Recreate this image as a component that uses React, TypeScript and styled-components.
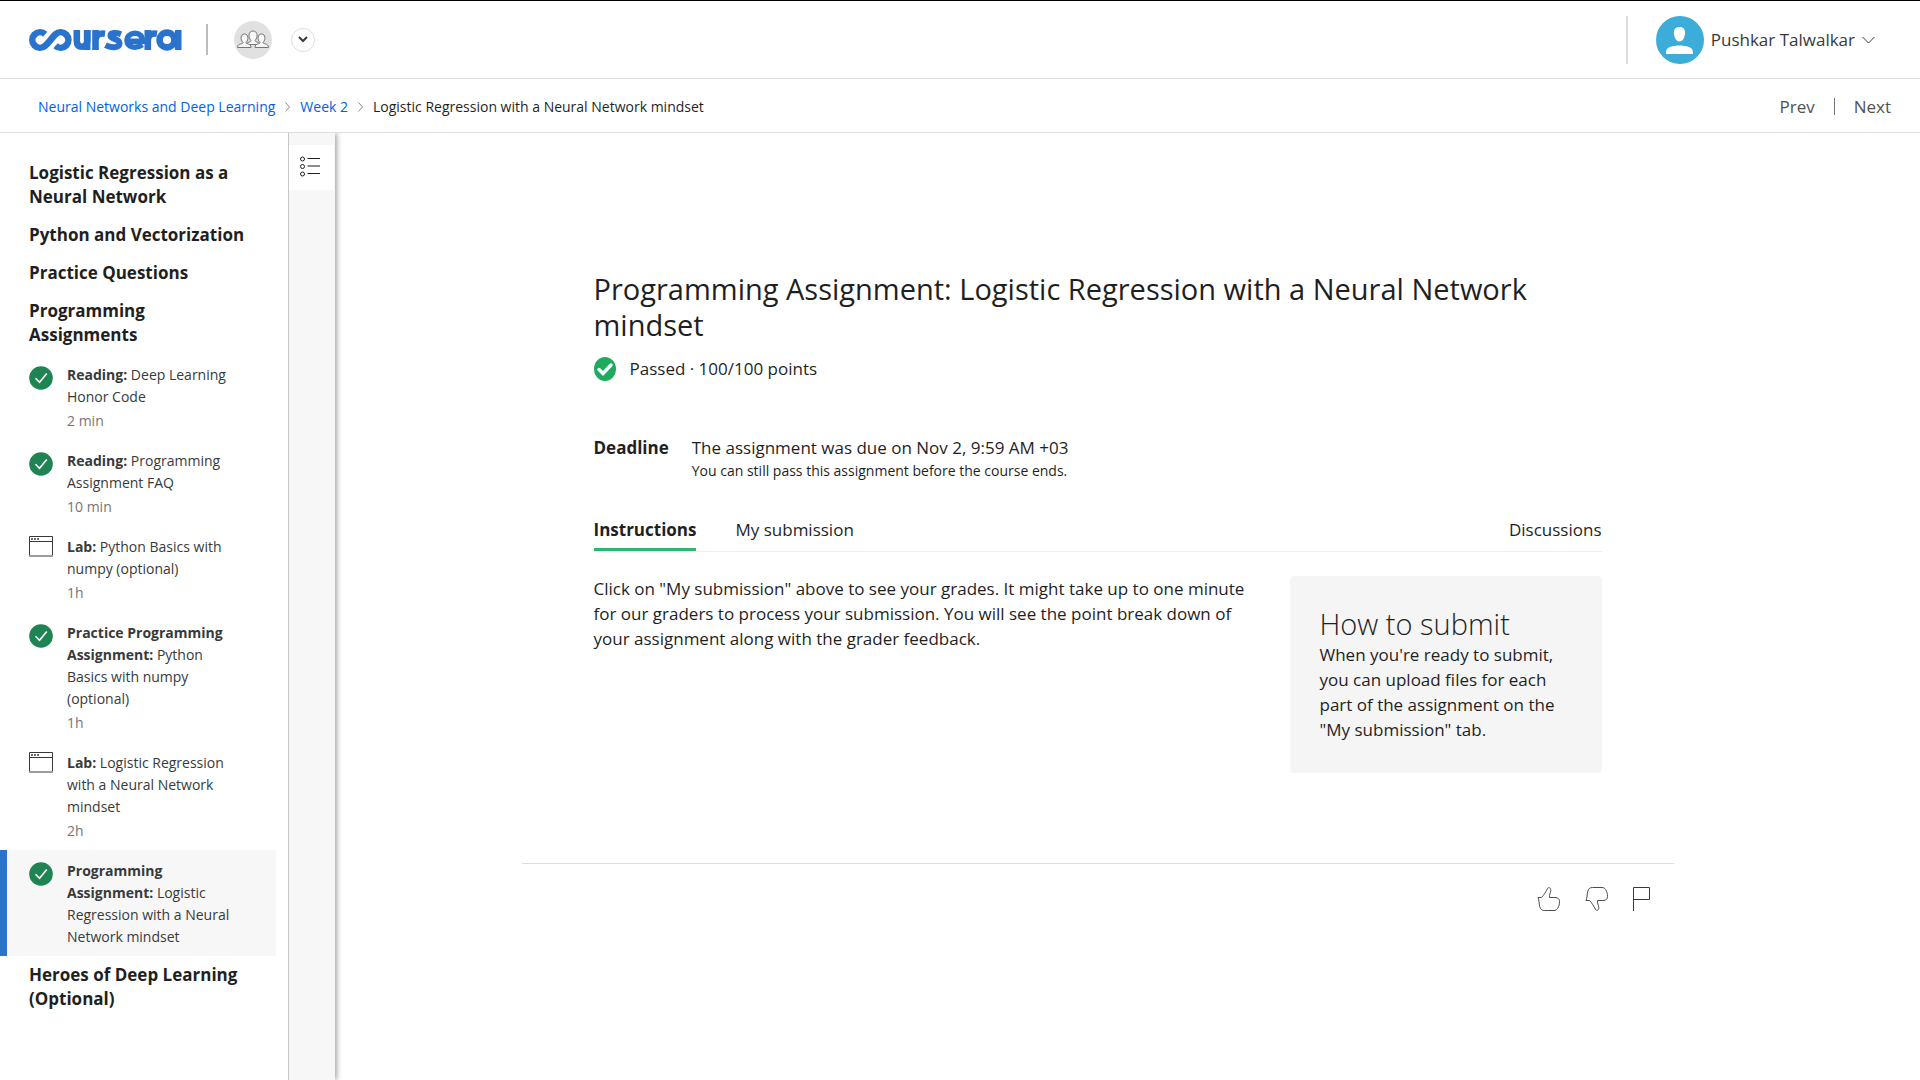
import React from "react";
import styled, { createGlobalStyle } from "styled-components";

const GlobalStyle = createGlobalStyle`
  *, *::before, *::after { box-sizing: border-box; }
  body { margin: 0; background: #fff; color: #1f1f1f; font-family: "Open Sans", "Noto Sans", sans-serif; font-size: 17px; line-height: 24px; }
  h1, h2, h3, p, ul, dl, dd { margin: 0; padding: 0; }
  ul { list-style: none; }
  a { color: inherit; text-decoration: none; }
  button { border: 0; padding: 0; margin: 0; background: none; font: inherit; color: inherit; cursor: pointer; }
  svg { display: block; flex: none; }
`;

const Page = styled.div`
  min-height: 100vh;
  display: flex;
  flex-direction: column;
  border-top: 1px solid #000;
`;

const TopBar = styled.header`
  display: flex;
  align-items: center;
  justify-content: space-between;
  height: 78px;
  padding: 0 45px 0 29px;
  border-bottom: 1px solid #ddd;
`;

const Group = styled.div`
  display: flex;
  align-items: center;
`;

const Rule = styled.span<{ $height: number; $color: string; $width?: number }>`
  width: ${(p) => p.$width ?? 2}px;
  height: ${(p) => p.$height}px;
  background: ${(p) => p.$color};
`;

const HomeLink = styled.a`
  margin-right: 24px;
`;

const Circle = styled.span`
  display: grid;
  place-items: center;
  width: 38px;
  height: 38px;
  margin: 0 19px 0 26px;
  border-radius: 50%;
  background: #e1e1e1;
`;

const SwitchButton = styled.button`
  display: grid;
  place-items: center;
  width: 24px;
  height: 24px;
  border: 1px solid #ddd;
  border-radius: 50%;
`;

const Account = styled.button`
  display: flex;
  align-items: center;
  gap: 7px;
  margin-left: 28px;
  color: #373a3c;
`;

const CrumbBar = styled.div`
  display: flex;
  align-items: center;
  justify-content: space-between;
  height: 54px;
  padding: 2px 29px 0 38px;
  border-bottom: 1px solid #ddd;
`;

const Crumbs = styled.nav`
  display: flex;
  align-items: center;
  gap: 10px;
  font-size: 14px;
  a { color: #0062e3; }
`;

const Pager = styled.nav`
  display: flex;
  align-items: center;
  gap: 19px;
  color: #525252;
`;

const Body = styled.div`
  flex: 1;
  display: flex;
`;

const Sidebar = styled.aside`
  flex: none;
  width: 288px;
  padding: 21px 12px 20px 0;
`;

const Heading = styled.h2`
  padding: 7px 28px 7px 29px;
  font-size: 17px;
  font-weight: 700;
  line-height: 24px;
`;

const Item = styled.a<{ $active?: boolean }>`
  display: flex;
  gap: 14px;
  padding: 10px 36px 8px ${(p) => (p.$active ? 22 : 29)}px;
  border-left: ${(p) => (p.$active ? "7px solid #2a73cc" : "0")};
  background: ${(p) => (p.$active ? "#f7f7f7" : "transparent")};
  color: #373a3c;
  font-size: 14px;
  line-height: 22px;
`;

const IconSlot = styled.span<{ $pad: number }>`
  padding-top: ${(p) => p.$pad}px;
`;

const Label = styled.span`
  display: flex;
  flex-direction: column;
  gap: 2px;
`;

const Time = styled.span`
  color: #757575;
`;

const Rail = styled.div`
  flex: none;
  width: 47px;
  padding-top: 12px;
  border-left: 1px solid #c7c7c7;
  background: #f7f7f7;
  box-shadow: 2px 0 5px rgba(0, 0, 0, 0.35);
  clip-path: inset(0 -12px 0 0);
`;

const RailButton = styled.button`
  display: flex;
  align-items: center;
  width: 45px;
  height: 45px;
  padding: 0 0 2px 11px;
  background: #fff;
`;

const Main = styled.main`
  flex: 1;
  padding: 138px 120px 40px 60px;
`;

const Column = styled.div`
  max-width: 1152px;
  margin: 0 auto;
`;

const Content = styled.article`
  padding: 0 72px 90px;
`;

const Title = styled.h1`
  font-size: 29px;
  font-weight: 400;
  line-height: 36px;
`;

const Passed = styled.div`
  display: flex;
  align-items: center;
  gap: 14px;
  padding-top: 14px;
`;

const Deadline = styled.dl`
  display: flex;
  gap: 23px;
  padding-top: 55px;
  dt { font-weight: 700; }
  small { display: block; font-size: 14px; line-height: 22px; }
`;

const Tabs = styled.div`
  display: flex;
  gap: 39px;
  margin-top: 23px;
  border-bottom: 1px solid #eee;
`;

const Tab = styled.button<{ $active?: boolean; $end?: boolean }>`
  padding: 13px 0 6px;
  font-weight: ${(p) => (p.$active ? 700 : 400)};
  border-bottom: 3px solid ${(p) => (p.$active ? "#2ab673" : "transparent")};
  margin-left: ${(p) => (p.$end ? "auto" : 0)};
`;

const Columns = styled.div`
  display: flex;
  gap: 40px;
  padding-top: 24px;
  align-items: flex-start;
`;

const Copy = styled.p`
  flex: 1;
  line-height: 25px;
`;

const Card = styled.section`
  flex: none;
  width: 312px;
  padding: 30px 30px 31px;
  border-radius: 4px;
  background: #f5f5f5;
  p { line-height: 25px; }
`;

const CardTitle = styled.h2`
  font-size: 29px;
  font-weight: 300;
  line-height: 36px;
`;

const Feedback = styled.footer`
  display: flex;
  justify-content: flex-end;
  gap: 24px;
  padding: 23px 23px 0;
  border-top: 1px solid #ddd;
`;

const Logo = () => (
  <svg width="153" height="22" viewBox="0 0 153 22" fill="none" stroke="#2a73cc" strokeWidth="6.600" role="img" aria-label="coursera">
    <path d="M16.200 5.300A7.700 7.700 0 1 0 16.200 16.700C20 13.500 23 8.500 26.500 5.300A7.700 7.700 0 1 1 26.500 16.700" />
    <path d="M47.800 1v10.500c0 4.500 2 6.200 5.200 6.200s5.200-1.700 5.200-6.200V1" />
    <path d="M58.200 1v20" />
    <path d="M66.500 21V1M66.500 12c0-5.500 3-8.300 9.500-7.300" />
    <path d="M92 5.300c-4.500-1.800-10.500-1.800-10.500 1.200c0 4.500 9 2.700 9 7.700c0 5-8.500 5-14 2" strokeWidth="6" />
    <path d="M97 12.200h16.500c0-5.500-3-8-7.500-8s-8 3.300-8 7.300c0 7 9 8.500 15.500 4.300" strokeWidth="5.400" />
    <path d="M118.800 21V1M118.800 12c0-5.500 3-8.300 9.200-7.300" />
    <circle cx="138" cy="11" r="7.400" />
    <path d="M149.200 1v20" />
  </svg>
);

const PeopleIcon = () => (
  <svg width="32" height="19" viewBox="0 0 32 19" fill="#f7f7f7" stroke="#757575">
    <path d="M9 14.500c1-3 5-2 5-4c-3-3-3-9.500 2-9.500s5 6.500 2 9.500c0 2 4 1 5 4z" />
    <path d="M.5 17.500c0-4.500 5.500-3 5.500-5c-3-3-2.500-8.500 1.500-8.500s4.500 5.500 1.500 8.500c0 2 5 .5 5 5z" />
    <path d="M18 17.500c0-4.500 5-3 5-5c-3-3-2.500-8.500 1.500-8.500s4.500 5.500 1.500 8.500c0 2 5.500.5 5.500 5z" />
  </svg>
);

const Avatar = () => (
  <svg width="48" height="48" viewBox="0 0 48 48">
    <circle cx="24" cy="24" r="24" fill="#3cadd9" />
    <path d="M23.500 11c4 0 6 2.500 5.500 7c-.4 4-2.500 7.500-5.500 7.500S18.400 22 18 18c-.5-4.500 1.500-7 5.500-7zM10 38c0-4.500 1-6 4-7c6-2 13-2 19 0c3 1 4 2.500 4 7z" fill="#fff" />
  </svg>
);

const Chevron = ({ w, h, d, color, stroke = 1 }: { w: number; h: number; d: string; color: string; stroke?: number }) => (
  <svg width={w} height={h} viewBox={`0 0 ${w} ${h}`} fill="none" stroke={color} strokeWidth={stroke}>
    <path d={d} />
  </svg>
);

const CheckIcon = () => (
  <svg width="24" height="24" viewBox="0 0 24 24">
    <circle cx="12" cy="12" r="11.800" fill="#1f8354" />
    <path d="M6.500 12.200l4 4L17.800 7.500" fill="none" stroke="#fff" strokeWidth="1.600" />
  </svg>
);

const LabIcon = () => (
  <svg width="24" height="21" viewBox="0 0 24 21" fill="none" stroke="#373a3c">
    <path d="M.5 20V.5h23V20M0 5.500h24" />
    <path d="M2 3h2M5 3h2M8 3h2" strokeWidth="2" stroke="#6b6e70" />
    <path d="M0 20h24" stroke="#9a9c9e" strokeWidth="2" />
  </svg>
);

const PassedIcon = () => (
  <svg width="22" height="24" viewBox="0 0 22 24">
    <ellipse cx="11" cy="12" rx="11" ry="12" fill="#1fab5e" />
    <path d="M5 12.500l4 4L17 8" fill="none" stroke="#fff" strokeWidth="3.400" strokeLinecap="round" />
  </svg>
);

const ListIcon = () => (
  <svg width="20" height="21" viewBox="0 0 20 21" fill="none" stroke="#1f1f1f">
    <circle cx="2.500" cy="3" r="2" />
    <circle cx="2.500" cy="10.500" r="2" />
    <circle cx="2.500" cy="18" r="2" />
    <path d="M7.500 2.500h12.500M7.500 17.500h12.500" />
    <path d="M7.500 10h12.500" stroke="#8c8c8c" strokeWidth="2" />
  </svg>
);

const Thumb = ({ down }: { down?: boolean }) => (
  <svg width="24" height="24" viewBox="0 0 24 24" fill="none" stroke="#4a4d52">
    <path
      transform={down ? "matrix(-1 0 0 -1 24 24) translate(24 0) scale(-1 1) translate(24 0) scale(-1 1)" : undefined}
      d="M1 10.500H4.500C7 8 9 4.500 10.500 1.500C11.500-.2 14 .8 13.800 3.500C13.600 6 12 8 12.500 10.500H18C21 10.500 22.500 12 22.500 14.500C22.500 17 22 19.500 20.500 21.500C19.500 23 18.500 23.500 17 23.500H7.500C4.500 23.500 3.300 22 2.700 19.500C2 16.500 2.300 13.500 1 10.500Z"
    />
  </svg>
);

const ThumbDown = () => (
  <svg width="24" height="24" viewBox="0 0 24 24" fill="none" stroke="#4a4d52">
    <path
      transform="matrix(1 0 0 -1 0 24)"
      d="M1 10.500H4.500C7 8 9 4.500 10.500 1.500C11.500-.2 14 .8 13.800 3.500C13.600 6 12 8 12.500 10.500H18C21 10.500 22.500 12 22.500 14.500C22.500 17 22 19.500 20.500 21.500C19.500 23 18.500 23.500 17 23.500H7.500C4.500 23.500 3.300 22 2.700 19.500C2 16.500 2.300 13.500 1 10.500Z"
    />
  </svg>
);

const FlagIcon = () => (
  <svg width="18" height="24" viewBox="0 0 18 24" fill="none" stroke="#373a3c">
    <path d="M.5 24V.5h16v12H.5" />
  </svg>
);

type Entry = { kind: string; name: string; time?: string; lab?: boolean; active?: boolean };

const entries: Entry[] = [
  { kind: "Reading:", name: "Deep Learning Honor Code", time: "2 min" },
  { kind: "Reading:", name: "Programming Assignment FAQ", time: "10 min" },
  { kind: "Lab:", name: "Python Basics with numpy (optional)", time: "1h", lab: true },
  { kind: "Practice Programming Assignment:", name: "Python Basics with numpy (optional)", time: "1h" },
  { kind: "Lab:", name: "Logistic Regression with a Neural Network mindset", time: "2h", lab: true },
  { kind: "Programming Assignment:", name: "Logistic Regression with a Neural Network mindset", active: true },
];

export default function App() {
  return (
    <Page>
      <GlobalStyle />
      <TopBar>
        <Group>
          <HomeLink href="#home"><Logo /></HomeLink>
          <Rule $height={31} $color="#bdbdbd" />
          <Circle><PeopleIcon /></Circle>
          <SwitchButton aria-label="Switch program">
            <Chevron w={10} h={7} d="M1 1l4 4l4-4" color="#373a3c" stroke={2} />
          </SwitchButton>
        </Group>
        <Group>
          <Rule $height={48} $color="#ddd" />
          <Account>
            <Avatar />
            Pushkar Talwalkar
            <Chevron w={13} h={8} d="M.5 1l6 6l6-6" color="#373a3c" />
          </Account>
        </Group>
      </TopBar>
      <CrumbBar>
        <Crumbs aria-label="Breadcrumb">
          <a href="#course">Neural Networks and Deep Learning</a>
          <Chevron w={5} h={10} d="M.5 .5l4 4.500l-4 4.500" color="#8c8c8c" />
          <a href="#week">Week 2</a>
          <Chevron w={5} h={10} d="M.5 .5l4 4.500l-4 4.500" color="#8c8c8c" />
          <span>Logistic Regression with a Neural Network mindset</span>
        </Crumbs>
        <Pager aria-label="Item">
          <a href="#prev">Prev</a>
          <Rule $width={1} $height={17} $color="#757575" />
          <a href="#next">Next</a>
        </Pager>
      </CrumbBar>
      <Body>
        <Sidebar>
          <Heading>Logistic Regression as a Neural Network</Heading>
          <Heading>Python and Vectorization</Heading>
          <Heading>Practice Questions</Heading>
          <Heading>Programming Assignments</Heading>
          <ul>
            {entries.map((e, i) => (
              <li key={i}>
                <Item href="#item" $active={e.active}>
                  <IconSlot $pad={e.lab ? 0 : 2}>{e.lab ? <LabIcon /> : <CheckIcon />}</IconSlot>
                  <Label>
                    <span><strong>{e.kind}</strong> {e.name}</span>
                    {e.time && <Time>{e.time}</Time>}
                  </Label>
                </Item>
              </li>
            ))}
          </ul>
          <Heading>Heroes of Deep Learning (Optional)</Heading>
        </Sidebar>
        <Rail>
          <RailButton aria-label="Course outline"><ListIcon /></RailButton>
        </Rail>
        <Main>
          <Column>
            <Content>
              <Title>Programming Assignment: Logistic Regression with a Neural Network mindset</Title>
              <Passed><PassedIcon />Passed · 100/100 points</Passed>
              <Deadline>
                <dt>Deadline</dt>
                <dd>
                  The assignment was due on Nov 2, 9:59 AM +03
                  <small>You can still pass this assignment before the course ends.</small>
                </dd>
              </Deadline>
              <Tabs>
                <Tab $active>Instructions</Tab>
                <Tab>My submission</Tab>
                <Tab $end>Discussions</Tab>
              </Tabs>
              <Columns>
                <Copy>
                  Click on "My submission" above to see your grades. It might take up to one minute for our graders to
                  process your submission. You will see the point break down of your assignment along with the grader
                  feedback.
                </Copy>
                <Card>
                  <CardTitle>How to submit</CardTitle>
                  <p>When you're ready to submit, you can upload files for each part of the assignment on the "My submission" tab.</p>
                </Card>
              </Columns>
            </Content>
            <Feedback>
              <button aria-label="Like"><Thumb /></button>
              <button aria-label="Dislike"><ThumbDown /></button>
              <button aria-label="Report"><FlagIcon /></button>
            </Feedback>
          </Column>
        </Main>
      </Body>
    </Page>
  );
}
